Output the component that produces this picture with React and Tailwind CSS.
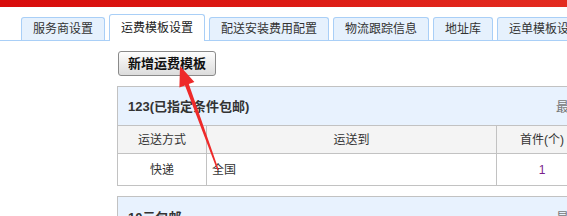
import React from "react";

const tabs = ["服务商设置", "运费模板设置", "配送安装费用配置", "物流跟踪信息", "地址库", "运单模板设置"];

const Tab = ({ label, active }) => (
  <div
    className={`shrink-0 px-[11px] text-[12px] rounded-t-[3px] border border-b-0 border-[#a9cff7] flex items-center justify-center ${
      active ? "h-[27px] bg-white text-[#222] mb-[-1px]" : "h-[23px] bg-[#e6f1fd] text-[#333]"
    }`}
  >
    {label}
  </div>
);

const Arrow = () => (
  <svg className="absolute left-0 top-0 pointer-events-none" width="567" height="216" viewBox="0 0 567 216">
    <polygon
      points="180,66 194.4,82.1 188.8,84.1 218.7,169.7 217.3,170.3 185,85.5 179.4,87.5"
      fill="#ee2a2a"
    />
  </svg>
);

export default function App() {
  return (
    <div
      className="relative w-[567px] h-[216px] overflow-hidden bg-white text-[#333]"
      style={{ fontFamily: '"Liberation Sans","Noto Sans CJK SC",sans-serif' }}
    >
      <div className="h-[7px] bg-gradient-to-r from-[#d80c0c] via-[#dc1a14] to-[#e32b20]" />

      <div className="h-[34px] flex items-end gap-[4px] pl-[21px] border-b border-[#a9cff7]">
        {tabs.map((t, i) => (
          <Tab key={t} label={t} active={i === 1} />
        ))}
      </div>

      <div className="pl-[118px] pt-[10px]">
        <button
          type="button"
          className="w-[98px] h-[25px] rounded-[3px] border border-[#8a8a8a] bg-gradient-to-b from-[#fdfdfd] to-[#dcdcdc] text-[13px] font-bold text-[#111] leading-none"
        >
          新增运费模板
        </button>
      </div>

      <div className="ml-[117px] mt-[10px] w-[560px] border border-[#c2c2c2]">
        <div className="h-[39px] bg-[#e8f2fe] flex items-center pl-[10px] pt-[2px] border-b border-[#c2c2c2]">
          <span className="w-[428px] shrink-0 text-[13px] font-bold text-[#333]">123(已指定条件包邮)</span>
          <span className="text-[13px] text-[#777] whitespace-nowrap">最后编辑时间：2019-05-10</span>
        </div>
        <div className="flex h-[28px] bg-[#f4f4f4] border-b border-[#c2c2c2] text-[12px] text-[#333]">
          <div className="w-[89px] shrink-0 flex items-center justify-center border-r border-[#c2c2c2]">运送方式</div>
          <div className="w-[290px] shrink-0 flex items-center justify-center border-r border-[#c2c2c2]">运送到</div>
          <div className="w-[90px] shrink-0 flex items-center justify-center">首件(个)</div>
        </div>
        <div className="flex h-[31px] bg-white text-[12px] text-[#333]">
          <div className="w-[89px] shrink-0 flex items-center justify-center border-r border-[#c2c2c2]">快递</div>
          <div className="w-[290px] shrink-0 flex items-center pl-[5px] border-r border-[#c2c2c2]">全国</div>
          <div className="w-[90px] shrink-0 flex items-center justify-center text-[#7b1f8c]">1</div>
        </div>
      </div>

      <div className="ml-[117px] mt-[10px] w-[560px] border border-[#c2c2c2]">
        <div className="h-[39px] bg-[#e8f2fe] flex items-center pl-[10px] pt-[2px]">
          <span className="w-[428px] shrink-0 text-[13px] font-bold text-[#333]">10元包邮</span>
          <span className="text-[13px] text-[#777] whitespace-nowrap">最后编辑时间：2019-05-10</span>
        </div>
      </div>

      <Arrow />
    </div>
  );
}
